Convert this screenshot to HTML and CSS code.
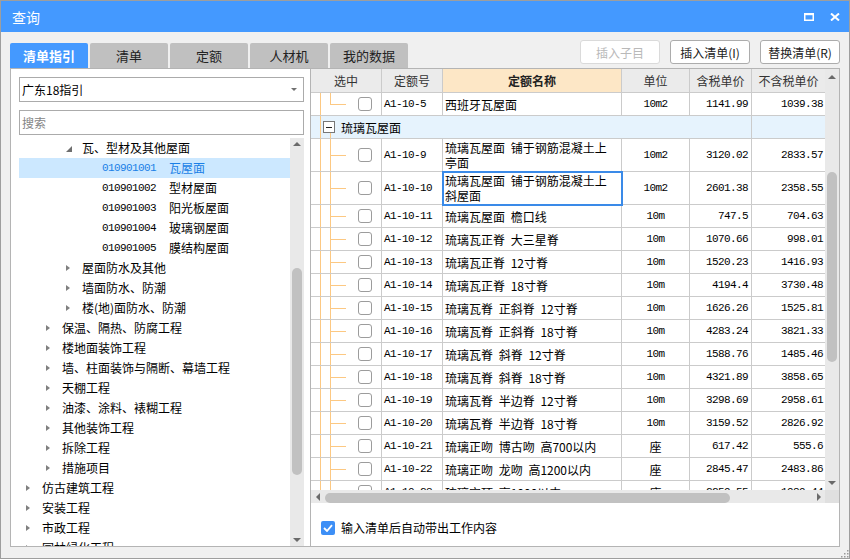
FILE: index.html
```html
<!DOCTYPE html>
<html lang="zh-CN">
<head>
<meta charset="utf-8">
<title>查询</title>
<link rel="stylesheet" href="styles.css">
</head>
<body>
<div class="window">
  <div class="titlebar">
    <span class="title">查询</span>
    <div class="winctrls">
      <svg class="ic" width="10" height="8" viewBox="0 0 10 8"><rect x="0.75" y="1" width="8.5" height="6.25" fill="none" stroke="#fff" stroke-width="1.5"/><rect x="0" y="0" width="10" height="2.2" fill="#fff"/></svg>
      <svg class="ic" width="10" height="8" viewBox="0 0 10 8"><path d="M1 0.5 L9 7.5 M9 0.5 L1 7.5" stroke="#fff" stroke-width="2" fill="none"/></svg>
    </div>
  </div>
  <div class="content">
    <div class="toolbar">
      <div class="tabs">
        <div class="tab active">清单指引</div>
        <div class="tab">清单</div>
        <div class="tab">定额</div>
        <div class="tab">人材机</div>
        <div class="tab">我的数据</div>
      </div>
      <div class="actions">
        <button class="btn" disabled>插入子目</button>
        <button class="btn">插入清单(I)</button>
        <button class="btn">替换清单(R)</button>
      </div>
    </div>
    <div class="main">
      <div class="left">
        <div class="select"><span>广东18指引</span><span class="caret"></span></div>
        <div class="search">搜索</div>
        <div class="tree-wrap">
          <div class="tree">
            <div class="node l2"><span class="arw"><svg width="6" height="6" viewBox="0 0 6 6"><polygon points="6,0 6,6 0,6" fill="#6e6e6e"/></svg></span><span>瓦、型材及其他屋面</span></div>
            <div class="node l3 selected"><span class="arw"></span><span class="code">010901001</span><span>瓦屋面</span></div>
            <div class="node l3"><span class="arw"></span><span class="code">010901002</span><span>型材屋面</span></div>
            <div class="node l3"><span class="arw"></span><span class="code">010901003</span><span>阳光板屋面</span></div>
            <div class="node l3"><span class="arw"></span><span class="code">010901004</span><span>玻璃钢屋面</span></div>
            <div class="node l3"><span class="arw"></span><span class="code">010901005</span><span>膜结构屋面</span></div>
            <div class="node l2"><span class="arw"><i class="tri"></i></span><span>屋面防水及其他</span></div>
            <div class="node l2"><span class="arw"><i class="tri"></i></span><span>墙面防水、防潮</span></div>
            <div class="node l2"><span class="arw"><i class="tri"></i></span><span>楼(地)面防水、防潮</span></div>
            <div class="node l1"><span class="arw"><i class="tri"></i></span><span>保温、隔热、防腐工程</span></div>
            <div class="node l1"><span class="arw"><i class="tri"></i></span><span>楼地面装饰工程</span></div>
            <div class="node l1"><span class="arw"><i class="tri"></i></span><span>墙、柱面装饰与隔断、幕墙工程</span></div>
            <div class="node l1"><span class="arw"><i class="tri"></i></span><span>天棚工程</span></div>
            <div class="node l1"><span class="arw"><i class="tri"></i></span><span>油漆、涂料、裱糊工程</span></div>
            <div class="node l1"><span class="arw"><i class="tri"></i></span><span>其他装饰工程</span></div>
            <div class="node l1"><span class="arw"><i class="tri"></i></span><span>拆除工程</span></div>
            <div class="node l1"><span class="arw"><i class="tri"></i></span><span>措施项目</span></div>
            <div class="node l0"><span class="arw"><i class="tri"></i></span><span>仿古建筑工程</span></div>
            <div class="node l0"><span class="arw"><i class="tri"></i></span><span>安装工程</span></div>
            <div class="node l0"><span class="arw"><i class="tri"></i></span><span>市政工程</span></div>
            <div class="node l0"><span class="arw"><i class="tri"></i></span><span>园林绿化工程</span></div>
          </div>
          <div class="vscroll tree-scroll">
            <i class="up"></i>
            <div class="thumb"></div>
            <i class="down"></i>
          </div>
        </div>
      </div>
      <div class="right">
        <div class="grid-area">
          <div class="grid">
            <div class="grow ghead">
              <div class="cell">选中</div>
              <div class="cell">定额号</div>
              <div class="cell hl">定额名称</div>
              <div class="cell">单位</div>
              <div class="cell">含税单价</div>
              <div class="cell last">不含税单价</div>
            </div>
            <div class="gbody">
              <div class="grow"><div class="cell c-sel half"><span class="cb"></span></div><div class="cell c-code">A1-10-5</div><div class="cell c-name">西班牙瓦屋面</div><div class="cell c-unit mono">10m2</div><div class="cell c-num">1141.99</div><div class="cell c-num last">1039.38</div></div>
              <div class="grow group"><div class="cell c-group"><span class="minus"></span><span>琉璃瓦屋面</span></div><div class="cell last"></div></div>
              <div class="grow tall"><div class="cell c-sel"><span class="cb"></span></div><div class="cell c-code">A1-10-9</div><div class="cell c-name">琉璃瓦屋面 铺于钢筋混凝土上<br>亭面</div><div class="cell c-unit mono">10m2</div><div class="cell c-num">3120.02</div><div class="cell c-num last">2833.57</div></div>
              <div class="grow tall"><div class="cell c-sel"><span class="cb"></span></div><div class="cell c-code">A1-10-10</div><div class="cell c-name focused">琉璃瓦屋面 铺于钢筋混凝土上<br>斜屋面</div><div class="cell c-unit mono">10m2</div><div class="cell c-num">2601.38</div><div class="cell c-num last">2358.55</div></div>
              <div class="grow"><div class="cell c-sel"><span class="cb"></span></div><div class="cell c-code">A1-10-11</div><div class="cell c-name">琉璃瓦屋面 檐口线</div><div class="cell c-unit mono">10m</div><div class="cell c-num">747.5</div><div class="cell c-num last">704.63</div></div>
              <div class="grow"><div class="cell c-sel"><span class="cb"></span></div><div class="cell c-code">A1-10-12</div><div class="cell c-name">琉璃瓦正脊 大三星脊</div><div class="cell c-unit mono">10m</div><div class="cell c-num">1070.66</div><div class="cell c-num last">998.01</div></div>
              <div class="grow"><div class="cell c-sel"><span class="cb"></span></div><div class="cell c-code">A1-10-13</div><div class="cell c-name">琉璃瓦正脊 12寸脊</div><div class="cell c-unit mono">10m</div><div class="cell c-num">1520.23</div><div class="cell c-num last">1416.93</div></div>
              <div class="grow"><div class="cell c-sel"><span class="cb"></span></div><div class="cell c-code">A1-10-14</div><div class="cell c-name">琉璃瓦正脊 18寸脊</div><div class="cell c-unit mono">10m</div><div class="cell c-num">4194.4</div><div class="cell c-num last">3730.48</div></div>
              <div class="grow"><div class="cell c-sel"><span class="cb"></span></div><div class="cell c-code">A1-10-15</div><div class="cell c-name">琉璃瓦脊 正斜脊 12寸脊</div><div class="cell c-unit mono">10m</div><div class="cell c-num">1626.26</div><div class="cell c-num last">1525.81</div></div>
              <div class="grow"><div class="cell c-sel"><span class="cb"></span></div><div class="cell c-code">A1-10-16</div><div class="cell c-name">琉璃瓦脊 正斜脊 18寸脊</div><div class="cell c-unit mono">10m</div><div class="cell c-num">4283.24</div><div class="cell c-num last">3821.33</div></div>
              <div class="grow"><div class="cell c-sel"><span class="cb"></span></div><div class="cell c-code">A1-10-17</div><div class="cell c-name">琉璃瓦脊 斜脊 12寸脊</div><div class="cell c-unit mono">10m</div><div class="cell c-num">1588.76</div><div class="cell c-num last">1485.46</div></div>
              <div class="grow"><div class="cell c-sel"><span class="cb"></span></div><div class="cell c-code">A1-10-18</div><div class="cell c-name">琉璃瓦脊 斜脊 18寸脊</div><div class="cell c-unit mono">10m</div><div class="cell c-num">4321.89</div><div class="cell c-num last">3858.65</div></div>
              <div class="grow"><div class="cell c-sel"><span class="cb"></span></div><div class="cell c-code">A1-10-19</div><div class="cell c-name">琉璃瓦脊 半边脊 12寸脊</div><div class="cell c-unit mono">10m</div><div class="cell c-num">3298.69</div><div class="cell c-num last">2958.61</div></div>
              <div class="grow"><div class="cell c-sel"><span class="cb"></span></div><div class="cell c-code">A1-10-20</div><div class="cell c-name">琉璃瓦脊 半边脊 18寸脊</div><div class="cell c-unit mono">10m</div><div class="cell c-num">3159.52</div><div class="cell c-num last">2826.92</div></div>
              <div class="grow"><div class="cell c-sel"><span class="cb"></span></div><div class="cell c-code">A1-10-21</div><div class="cell c-name">琉璃正吻 博古吻 高700以内</div><div class="cell c-unit">座</div><div class="cell c-num">617.42</div><div class="cell c-num last">555.6</div></div>
              <div class="grow"><div class="cell c-sel"><span class="cb"></span></div><div class="cell c-code">A1-10-22</div><div class="cell c-name">琉璃正吻 龙吻 高1200以内</div><div class="cell c-unit">座</div><div class="cell c-num">2845.47</div><div class="cell c-num last">2483.86</div></div>
              <div class="grow"><div class="cell c-sel"><span class="cb"></span></div><div class="cell c-code">A1-10-23</div><div class="cell c-name">琉璃宝顶 高1000以内</div><div class="cell c-unit">座</div><div class="cell c-num">2259.55</div><div class="cell c-num last">1989.44</div></div>
            </div>
          </div>
          <div class="vscroll grid-scroll">
            <i class="up"></i>
            <div class="thumb"></div>
            <i class="down"></i>
          </div>
        </div>
        <div class="hbar">
          <div class="hscroll"><i class="left-a"></i><div class="hthumb"></div><i class="right-a"></i></div>
          <div class="corner"></div>
        </div>
        <div class="footer">
          <span class="chk"><svg width="10" height="8" viewBox="0 0 10 8"><path d="M1 4 L4 7 L9 1.2" stroke="#fff" stroke-width="1.8" fill="none"/></svg></span>
          <span>输入清单后自动带出工作内容</span>
        </div>
      </div>
    </div>
  </div>
  <svg class="grip" width="9" height="9" viewBox="0 0 9 9"><rect x="7" y="1" width="1.5" height="1.5" fill="#9a9a9a"/><rect x="4" y="4" width="1.5" height="1.5" fill="#9a9a9a"/><rect x="7" y="4" width="1.5" height="1.5" fill="#9a9a9a"/><rect x="1" y="7" width="1.5" height="1.5" fill="#9a9a9a"/><rect x="4" y="7" width="1.5" height="1.5" fill="#9a9a9a"/><rect x="7" y="7" width="1.5" height="1.5" fill="#9a9a9a"/></svg>
</div>
</body>
</html>
```

FILE: styles.css
```css
* { box-sizing: border-box; }
html, body { margin: 0; padding: 0; }
body {
  width: 850px;
  height: 560px;
  overflow: hidden;
  background: #ffffff;
  font-family: "Noto Sans CJK SC", "Noto Sans", sans-serif;
  font-size: 12px;
  color: #000;
}
.window {
  position: relative;
  width: 850px;
  height: 559px;
  border: 1px solid #9e9e9e;
  background: #f0f0f0;
  display: flex;
  flex-direction: column;
  overflow: hidden;
}
.titlebar {
  height: 31px;
  flex: none;
  background: #4499ff;
  color: #fff;
  display: flex;
  align-items: center;
  justify-content: space-between;
  padding: 0 9px 0 11px;
}
.title { font-size: 14px; line-height: 16px; margin-top: 1px; }
.winctrls { display: flex; align-items: center; gap: 16px; }
.ic { display: block; }

.content {
  flex: 1;
  min-height: 0;
  display: flex;
  flex-direction: column;
  padding: 0 9px 11px 9px;
}
.toolbar {
  height: 36px;
  flex: none;
  display: flex;
  justify-content: space-between;
}
.tabs { display: flex; gap: 2px; align-self: flex-end; }
.tab {
  width: 78px;
  height: 25px;
  background: #c0c0c0;
  border-radius: 2px 2px 0 0;
  color: #222;
  font-size: 13px;
  display: flex;
  align-items: center;
  justify-content: center;
  line-height: 1;
}
.tab.active { background: #4499ff; color: #fff; font-weight: bold; }
.actions { display: flex; gap: 10px; margin-top: 8px; align-self: flex-start; }
.btn {
  width: 80px;
  height: 24px;
  background: #fff;
  border: 1px solid #acacac;
  border-radius: 3px;
  font-family: "Noto Sans CJK SC", "Noto Sans", sans-serif;
  font-size: 12px;
  color: #222;
  padding: 0;
  display: flex;
  align-items: center;
  justify-content: center;
}
.btn:disabled { border-color: #dadada; color: #b9b9b9; }

.main { height: 479px; flex: none; display: flex; min-height: 0; }
.left {
  width: 300px;
  flex: none;
  min-height: 0;
  background: #fff;
  border: 1px solid #b4b4b4;
  border-right: none;
  padding: 8px 6px 0 8px;
  display: flex;
  flex-direction: column;
  overflow: hidden;
}
.select, .search {
  height: 25px;
  flex: none;
  border: 1px solid #ababab;
  display: flex;
  align-items: center;
  padding: 0 6px 0 2px;
}
.select { justify-content: space-between; color: #000; }
.caret {
  width: 0; height: 0;
  border-left: 3px solid transparent;
  border-right: 3px solid transparent;
  border-top: 3px solid #707070;
}
.search { margin-top: 8px; color: #858585; }
.tree-wrap { margin-top: 3px; flex: 1; display: flex; overflow: hidden; min-height: 0; }
.tree { flex: 1; overflow: hidden; }
.node {
  height: 20px;
  display: flex;
  align-items: center;
  white-space: nowrap;
  line-height: 20px;
}
.node.l0 { padding-left: 7px; }
.node.l1 { padding-left: 27px; }
.node.l2 { padding-left: 47px; }
.node.l3 { padding-left: 67px; }
.arw { width: 16px; flex: none; display: flex; align-items: center; }
.arw svg { display: block; margin-top: 1px; }
.tri {
  display: block;
  width: 0; height: 0;
  border-left: 4px solid #808080;
  border-top: 3.5px solid transparent;
  border-bottom: 3.5px solid transparent;
}
.code {
  font-family: "Liberation Mono", monospace;
  font-size: 11px;
  letter-spacing: -0.6px;
  margin-right: 13px;
}
.node.selected { background: #cce8ff; color: #1a7fe6; }

.vscroll {
  width: 14px;
  flex: none;
  background: #e9e9e9;
  display: flex;
  flex-direction: column;
  align-items: center;
}
.vscroll .up {
  display: block; width: 0; height: 0;
  border-left: 4px solid transparent;
  border-right: 4px solid transparent;
  border-bottom: 4px solid #6a6a6a;
}
.vscroll .down {
  display: block; width: 0; height: 0;
  margin-top: auto;
  border-left: 4px solid transparent;
  border-right: 4px solid transparent;
  border-top: 4px solid #6a6a6a;
}
.vscroll .thumb { width: 10px; background: #c1c1c1; border-radius: 5px; flex: none; }
.tree-scroll { padding: 4px 0 4px 0; }
.tree-scroll .thumb { margin-top: 122px; height: 207px; }
.grid-scroll { padding: 6px 0 5px 0; }
.grid-scroll .thumb { margin-top: 93px; height: 190px; }

.right {
  width: 530px;
  flex: none;
  min-height: 0;
  background: #fff;
  border: 1px solid #b4b4b4;
  display: flex;
  flex-direction: column;
  overflow: hidden;
}
.grid-area { height: 421px; flex: none; display: flex; }
.grid { width: 514px; flex: none; overflow: hidden; }
.grow {
  display: grid;
  grid-template-columns: 71px 61px 179px 68px 62px 73px;
}
.cell {
  min-height: 23px;
  border-right: 1px solid #cbcbcb;
  border-bottom: 1px solid #cbcbcb;
  display: flex;
  align-items: center;
  padding: 0 2px;
  overflow: hidden;
  white-space: nowrap;
  word-spacing: 3px;
}
.cell.last { border-right: none; }
.ghead .cell {
  min-height: 24px;
  background: #ebebeb;
  justify-content: center;
  color: #333;
}
.ghead .cell.hl { background: #fde7c6; font-weight: bold; color: #222; }
.grow.tall .cell { min-height: 33px; }
.c-name { line-height: 15px; padding-left: 2px; }
.c-code {
  font-family: "Liberation Mono", monospace;
  font-size: 11px;
  letter-spacing: -0.6px;
  padding-left: 2px;
}
.c-unit { justify-content: center; }
.mono { font-family: "Liberation Mono", monospace; font-size: 11px; letter-spacing: -0.6px; }
.c-num {
  justify-content: flex-end;
  font-family: "Liberation Mono", monospace;
  font-size: 11px;
  letter-spacing: -0.6px;
  padding-right: 3px;
}
.c-num.last { padding-right: 2px; }
.c-sel {
  padding-left: 47px;
  background-image: linear-gradient(#fcc882, #fcc882), linear-gradient(#fcc882, #fcc882), linear-gradient(#fcc882, #fcc882);
  background-repeat: no-repeat;
  background-size: 1px 100%, 1px 100%, 16px 1px;
  background-position: 9px 0, 19px 0, 19px 50%;
}
.c-sel.half { background-size: 1px 100%, 1px 50%, 16px 1px; }
.cb {
  width: 14px;
  height: 14px;
  border: 1px solid #9c9c9c;
  border-radius: 3px;
  background: #fff;
  flex: none;
}
.grow.group .cell { background-color: #e6f3fd; }
.c-group {
  grid-column: 1 / 6;
  padding-left: 12px;
  background-image: linear-gradient(#fcc882, #fcc882), linear-gradient(#fcc882, #fcc882);
  background-repeat: no-repeat;
  background-size: 1px 100%, 1px 5px;
  background-position: 9px 0, 19px 100%;
}
.minus {
  width: 12px;
  height: 12px;
  border: 1px solid #777;
  background: #fff;
  margin-right: 6px;
  flex: none;
  display: flex;
  align-items: center;
  justify-content: center;
}
.minus::before { content: ""; width: 6px; height: 1px; background: #222; }
.focused { outline: 2px solid #3a8ae8; outline-offset: -1px; position: relative; z-index: 1; }

.hbar { height: 13px; flex: none; display: flex; }
.hscroll {
  width: 514px;
  background: #e9e9e9;
  display: flex;
  align-items: center;
  padding: 0 4px 0 5px;
}
.left-a {
  display: block; width: 0; height: 0;
  border-right: 4px solid #6a6a6a;
  border-top: 4px solid transparent;
  border-bottom: 4px solid transparent;
}
.right-a {
  display: block; width: 0; height: 0;
  margin-left: auto;
  border-left: 4px solid #6a6a6a;
  border-top: 4px solid transparent;
  border-bottom: 4px solid transparent;
}
.hthumb { width: 405px; height: 10px; margin-left: 5px; margin-top: 2px; background: #c1c1c1; border-radius: 5px; }
.corner { width: 14px; background: #e0e0e0; }
.footer {
  flex: 1;
  display: flex;
  align-items: flex-start;
  padding: 18px 0 0 10px;
  gap: 6px;
  line-height: 14px;
}
.chk {
  width: 14px;
  height: 14px;
  border-radius: 2px;
  background: #3d8ff6;
  display: flex;
  align-items: center;
  justify-content: center;
  flex: none;
}
.chk svg { display: block; }
.grip { position: absolute; right: 0; bottom: 0; display: block; }
```
